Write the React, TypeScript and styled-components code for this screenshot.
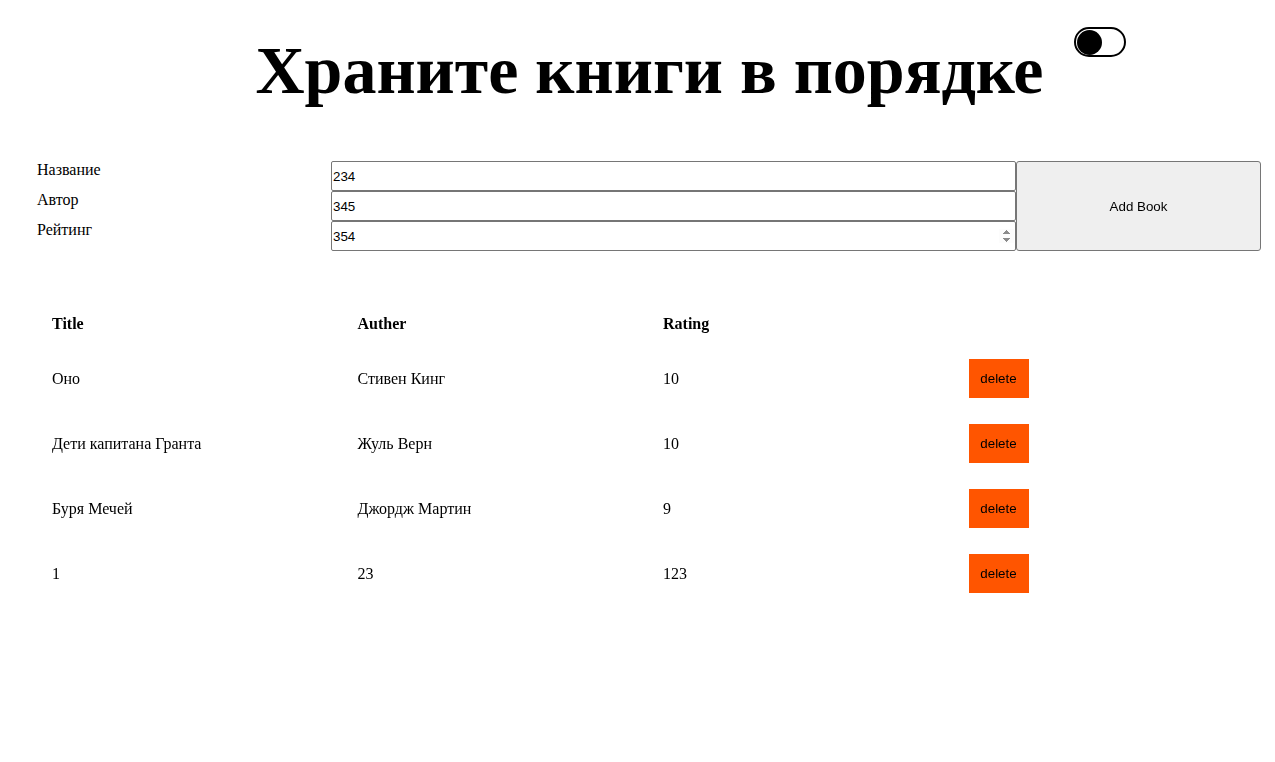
import React from "react";
import styled, { createGlobalStyle } from "styled-components";

const Global = createGlobalStyle`
  html, body { margin: 0; padding: 0; background: #fff; }
  body { margin: 8px; font-family: "Liberation Serif", "Times New Roman", serif; font-size: 16px; color: #000; }
`;

const Header = styled.header`
  display: grid;
  grid-template-columns: 1fr auto 1fr;
  align-items: start;
  padding-left: 24px;
`;

const Title = styled.h1`
  grid-column: 2;
  margin: 17px 0 0;
  font-family: "Liberation Serif", "Times New Roman", serif;
  font-weight: bold;
  font-size: 68px;
  line-height: 90px;
  white-space: nowrap;
`;

const Toggle = styled.div`
  grid-column: 3;
  justify-self: start;
  margin: 19px 0 0 30px;
  width: 46px;
  height: 26px;
  border: 2px solid #000;
  border-radius: 15px;
  display: flex;
  align-items: center;
  padding: 0 1px;
  box-sizing: content-box;
`;

const Knob = styled.div`
  width: 25px;
  height: 25px;
  border-radius: 50%;
  background: #000;
`;

const Form = styled.form`
  display: grid;
  grid-template-columns: 294px 1fr 245px;
  margin: 46px 6px 0 29px;
`;

const Labels = styled.div`
  display: flex;
  flex-direction: column;
`;

const Label = styled.label`
  height: 30px;
  line-height: 18px;
  font-size: 16px;
`;

const Inputs = styled.div`
  display: flex;
  flex-direction: column;
`;

const Input = styled.input`
  height: 30px;
  box-sizing: border-box;
  margin: 0;
  border: 1px solid #767676;
  border-radius: 2px;
  padding: 1px 1px;
  font-family: "Liberation Sans", Arial, sans-serif;
  font-size: 13.33px;
  color: #000;
  background: #fff;
  outline: none;
`;

const AddButton = styled.button`
  height: 90px;
  margin: 0;
  border: 1px solid #767676;
  border-radius: 3px;
  background: #efefef;
  font-family: "Liberation Sans", Arial, sans-serif;
  font-size: 13.33px;
  color: #000;
`;

const Table = styled.table`
  margin: 51px 8px 0 29px;
  width: calc(100% - 37px);
  border-collapse: collapse;
  table-layout: fixed;
`;

const Th = styled.th`
  text-align: left;
  padding: 13px 15px;
  height: 18px;
  font-size: 16px;
  font-weight: bold;
  line-height: 18px;
`;

const Td = styled.td`
  padding: 13px 15px;
  height: 39px;
  font-size: 16px;
  line-height: 18px;
  vertical-align: middle;
`;

const DeleteButton = styled.button`
  width: 60px;
  height: 39px;
  border: none;
  background: #ff5500;
  font-family: "Liberation Sans", Arial, sans-serif;
  font-size: 13.33px;
  color: #000;
  padding: 0;
`;

const books = [
  { title: "Оно", author: "Стивен Кинг", rating: "10" },
  { title: "Дети капитана Гранта", author: "Жуль Верн", rating: "10" },
  { title: "Буря Мечей", author: "Джордж Мартин", rating: "9" },
  { title: "1", author: "23", rating: "123" },
];

export default function App() {
  return (
    <>
      <Global />
      <Header>
        <Title>Храните книги в порядке</Title>
        <Toggle>
          <Knob />
        </Toggle>
      </Header>
      <Form onSubmit={(e) => e.preventDefault()}>
        <Labels>
          <Label>Название</Label>
          <Label>Автор</Label>
          <Label>Рейтинг</Label>
        </Labels>
        <Inputs>
          <Input type="text" defaultValue="234" />
          <Input type="text" defaultValue="345" />
          <Input type="number" defaultValue="354" autoFocus />
        </Inputs>
        <AddButton type="submit">Add Book</AddButton>
      </Form>
      <Table>
        <thead>
          <tr>
            <Th>Title</Th>
            <Th>Auther</Th>
            <Th>Rating</Th>
            <Th></Th>
          </tr>
        </thead>
        <tbody>
          {books.map((b, i) => (
            <tr key={i}>
              <Td>{b.title}</Td>
              <Td>{b.author}</Td>
              <Td>{b.rating}</Td>
              <Td>
                <DeleteButton>delete</DeleteButton>
              </Td>
            </tr>
          ))}
        </tbody>
      </Table>
    </>
  );
}
